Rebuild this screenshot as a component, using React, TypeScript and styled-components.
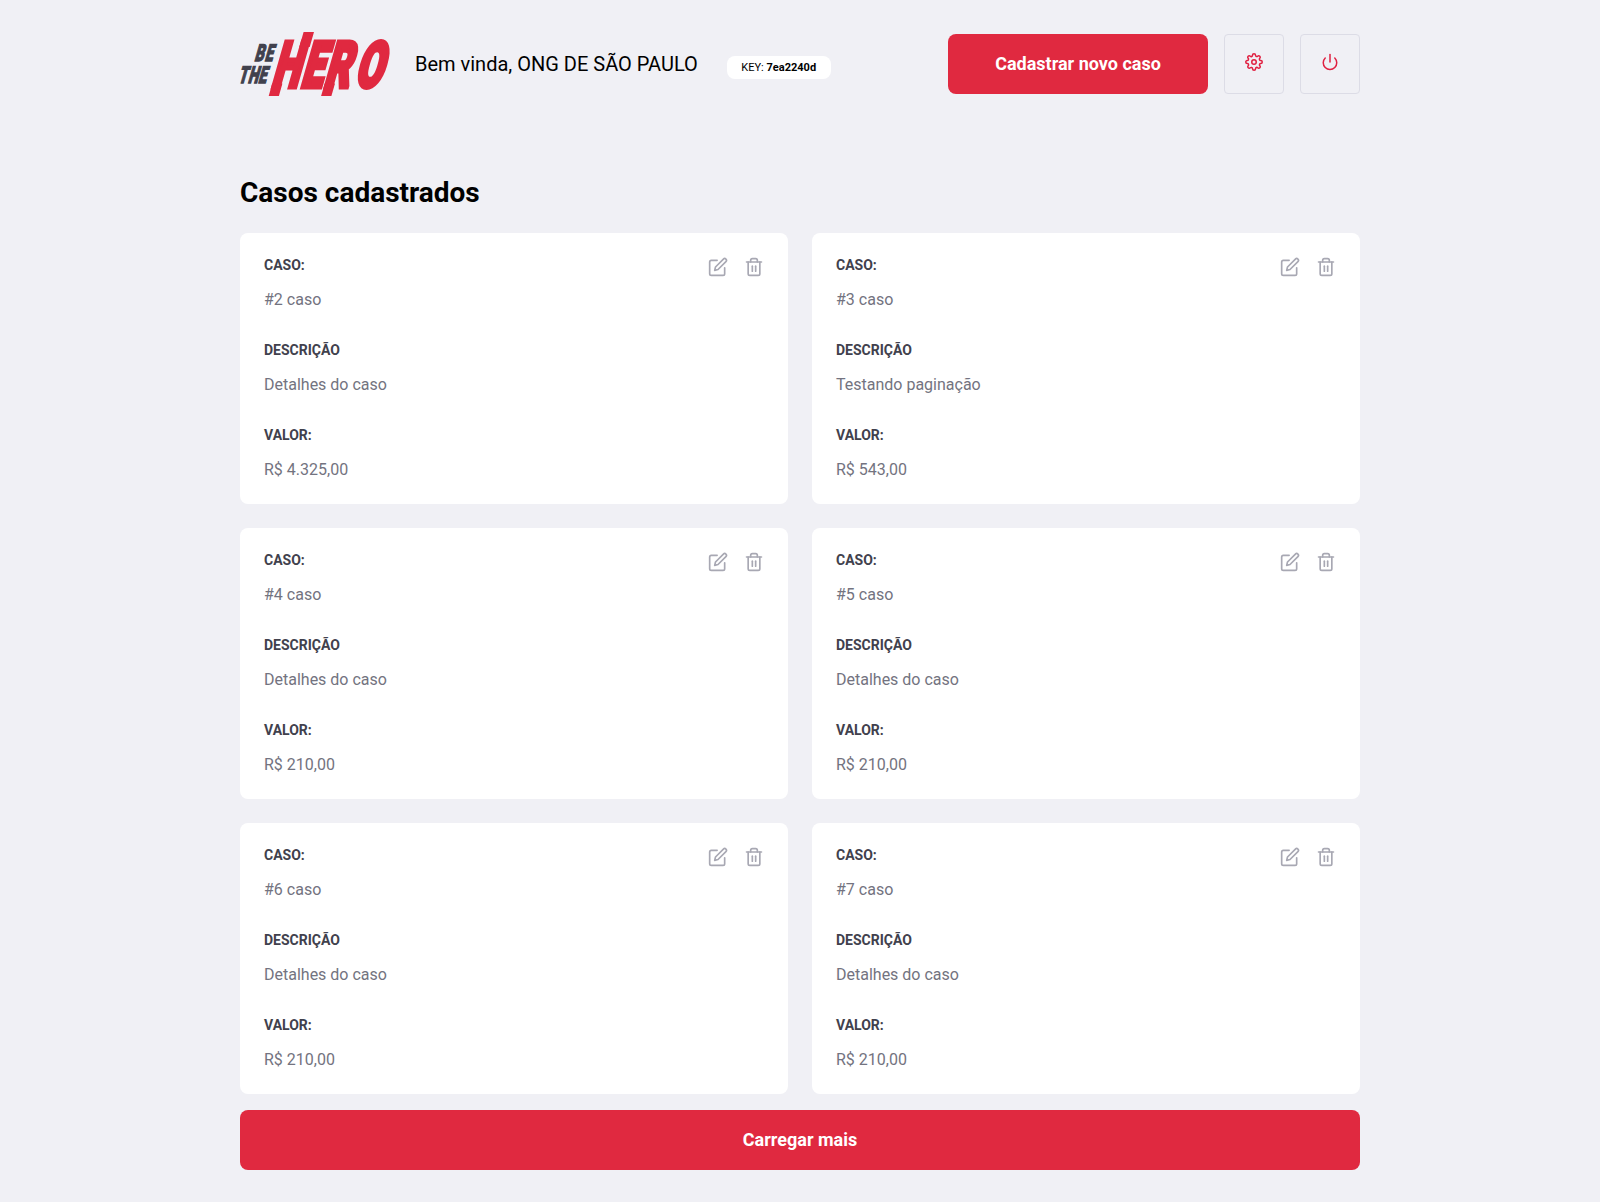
import React from 'react';
import styled, { createGlobalStyle } from 'styled-components';
import { FiEdit, FiPower, FiSettings, FiTrash2 } from 'react-icons/fi';

const GlobalStyle = createGlobalStyle`
  * {
    margin: 0;
    padding: 0;
    box-sizing: border-box;
  }
  body, button {
    font: 400 14px Roboto, sans-serif;
  }
  body {
    background: #f0f0f5;
  }
  button {
    cursor: pointer;
  }
`;

const Container = styled.div`
  width: 100%;
  max-width: 1180px;
  padding: 32px 30px;
  margin: 0 auto;
`;

const Header = styled.header`
  display: flex;
  align-items: center;
  height: 64px;
`;

const Welcome = styled.span`
  margin-left: 24px;
  padding-top: 2px;
  font-size: 20px;
  display: flex;
  align-items: baseline;
`;

const KeyBadge = styled.span`
  margin-left: 29px;
  padding: 5px 14.5px;
  border-radius: 8px;
  background: #fff;
  font-size: 11px;
  line-height: 13px;
`;

const Actions = styled.div`
  display: flex;
  gap: 16px;
  margin-left: auto;
`;

const PrimaryButton = styled.button<{ $width: string }>`
  width: ${({ $width }) => $width};
  height: 60px;
  border: 0;
  border-radius: 8px;
  background: #e02940;
  color: #fff;
  font-size: 18px;
  font-weight: 700;
  line-height: 60px;
  text-align: center;
`;

const IconButton = styled.button`
  width: 60px;
  height: 60px;
  padding-bottom: 2px;
  border: 1px solid #dcdce6;
  border-radius: 4px;
  background: transparent;
`;

const Title = styled.h1`
  margin: 80px 0 24px;
  font-size: 28px;
  line-height: 33px;
`;

const CaseGrid = styled.ul`
  display: grid;
  grid-template-columns: repeat(2, 1fr);
  gap: 24px;
  margin-bottom: 16px;
  list-style: none;
`;

const CaseCard = styled.li`
  display: flex;
  justify-content: space-between;
  align-items: flex-start;
  padding: 24px;
  border-radius: 8px;
  background: #fff;
`;

const Fields = styled.div`
  display: flex;
  flex-direction: column;
  gap: 32px;
`;

const Label = styled.strong`
  display: block;
  margin-bottom: 16px;
  color: #41414d;
  line-height: 16px;
`;

const Value = styled.p`
  color: #737380;
  font-size: 16px;
  line-height: 21px;
`;

const CardActions = styled.div`
  display: flex;
  gap: 16px;
`;

const CardButton = styled.button`
  display: flex;
  border: 0;
  background: transparent;
`;

const LogoSvg = styled.svg`
  flex: none;
  overflow: visible;
  font-family: Roboto, sans-serif;
  font-weight: 900;
`;

const cases = [
  { id: 2, description: 'Detalhes do caso', value: 'R$ 4.325,00' },
  { id: 3, description: 'Testando paginação', value: 'R$ 543,00' },
  { id: 4, description: 'Detalhes do caso', value: 'R$ 210,00' },
  { id: 5, description: 'Detalhes do caso', value: 'R$ 210,00' },
  { id: 6, description: 'Detalhes do caso', value: 'R$ 210,00' },
  { id: 7, description: 'Detalhes do caso', value: 'R$ 210,00' },
];

function Logo() {
  return (
    <LogoSvg width="151" height="64" viewBox="0 0 151 64" role="img" aria-label="Be The Hero">
      <g fill="#41414d" stroke="#41414d" strokeWidth="1.3" fontSize="23.4">
        <text transform="translate(14 29.4) skewX(-16) scale(.61 1)" x="0 16.8">BE</text>
        <text transform="translate(-2.2 51) skewX(-16) scale(.61 1)" x="0 16 32.8">THE</text>
      </g>
      <g fill="#e02940" stroke="#e02940">
        <text
          transform="translate(30.4 54.6) skewX(-16) scale(.62 1)"
          x="0 47.3 84.8 134.5"
          fontSize="63.3"
          strokeWidth="4.8"
        >
          HERO
        </text>
        {/* slanted stems running past the cap line and the baseline */}
        <g stroke="none">
          <path d="M63.6 0H74L69.7 15H59.3z" />
          <path d="M32.2 51.500h10.200L38.900 64H28.700z" />
          <path d="M84.700 51.500h10.300L91.400 64H81.100z" />
        </g>
      </g>
    </LogoSvg>
  );
}

export default function App() {
  return (
    <>
      <GlobalStyle />
      <Container>
        <Header>
          <Logo />
          <Welcome>
            Bem vinda, ONG DE SÃO PAULO
            <KeyBadge>
              KEY: <b>7ea2240d</b>
            </KeyBadge>
          </Welcome>
          <Actions>
            <PrimaryButton $width="260px">Cadastrar novo caso</PrimaryButton>
            <IconButton aria-label="Configurações">
              <FiSettings size={18} color="#e02041" />
            </IconButton>
            <IconButton aria-label="Sair">
              <FiPower size={18} color="#e02041" />
            </IconButton>
          </Actions>
        </Header>

        <Title>Casos cadastrados</Title>

        <CaseGrid>
          {cases.map((item) => (
            <CaseCard key={item.id}>
              <Fields>
                <div>
                  <Label>CASO:</Label>
                  <Value>#{item.id} caso</Value>
                </div>
                <div>
                  <Label>DESCRIÇÃO</Label>
                  <Value>{item.description}</Value>
                </div>
                <div>
                  <Label>VALOR:</Label>
                  <Value>{item.value}</Value>
                </div>
              </Fields>
              <CardActions>
                <CardButton aria-label="Editar">
                  <FiEdit size={20} color="#a8a8b3" />
                </CardButton>
                <CardButton aria-label="Excluir">
                  <FiTrash2 size={20} color="#a8a8b3" />
                </CardButton>
              </CardActions>
            </CaseCard>
          ))}
        </CaseGrid>

        <PrimaryButton $width="100%">Carregar mais</PrimaryButton>
      </Container>
    </>
  );
}
